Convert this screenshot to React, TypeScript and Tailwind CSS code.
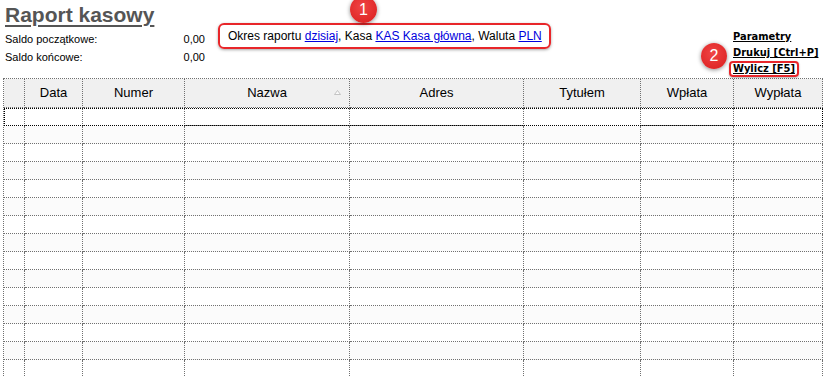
import React from "react";

const cols = ["", "Data", "Numer", "Nazwa", "Adres", "Tytułem", "Wpłata", "Wypłata"];
const gridCls = "grid grid-cols-[21px_58px_102px_165px_174px_117px_93px_1fr]";

function Badge({ n, className }: { n: string; className: string }) {
  return (
    <div
      className={
        "absolute flex items-center justify-center rounded-full bg-[radial-gradient(circle_at_45%_40%,#f04545,#d91c1c)] text-white shadow-[0_1px_4px_rgba(0,0,0,0.45)] text-[16px] " +
        className
      }
      style={{ fontFamily: '"Liberation Sans", Arial, sans-serif' }}
    >
      {n}
    </div>
  );
}

export default function App() {
  const rows = Array.from({ length: 15 }, (_, i) => i);
  return (
    <div className="relative w-[823px] h-[376px] overflow-hidden bg-white" style={{ fontFamily: '"Liberation Sans", Arial, sans-serif' }}>
      <div className="relative flex h-[78px]">
        <div className="w-[213px] pl-[5px] pt-[2px]">
          <div className="text-[21px] leading-[25px] font-bold text-[#555555] underline decoration-[#555555] underline-offset-[3px] decoration-[2px]">
            Raport kasowy
          </div>
          <div className="mt-[3px] text-[11px] leading-[18px] text-black">
            <div className="flex justify-between pr-[8px]">
              <span>Saldo początkowe:</span>
              <span>0,00</span>
            </div>
            <div className="flex justify-between pr-[8px]">
              <span>Saldo końcowe:</span>
              <span>0,00</span>
            </div>
          </div>
        </div>
        <div className="mt-[23px] ml-[5px] h-[26px] w-[333px] rounded-[6px] border-2 border-[#e8262a] shadow-[0_1px_3px_rgba(0,0,0,0.35)] flex items-center pl-[8px] text-[12px] text-black">
          <span>
            Okres raportu <span className="text-[#0000dd] underline">dzisiaj</span>, Kasa{" "}
            <span className="text-[#0000dd] underline">KAS Kasa główna</span>, Waluta{" "}
            <span className="text-[#0000dd] underline">PLN</span>
          </span>
        </div>
        <div className="flex-1" />
        <div className="mt-[29px] w-[94px] text-[11px] leading-[16px] font-bold text-black" style={{ fontFamily: '"DejaVu Sans Condensed", "DejaVu Sans", sans-serif' }}>
          <div className="pl-[4px] underline">Parametry</div>
          <div className="pl-[4px] underline">Drukuj [Ctrl+P]</div>
          <div className="inline-block rounded-[4px] border-2 border-[#e8262a] px-[2px] leading-[12px] shadow-[0_1px_2px_rgba(0,0,0,0.3)]">
            <span className="underline">Wylicz [F5]</span>
          </div>
        </div>
        <Badge n="1" className="left-[350px] top-[-4px] w-[27px] h-[27px]" />
        <Badge n="2" className="left-[701px] top-[43px] w-[26px] h-[26px]" />
      </div>

      <div className="ml-[3px] border-l border-t border-dotted border-[#707070]">
        <div className={gridCls + " bg-[#f0f0f0] h-[29px]"}>
          {cols.map((c, i) => (
            <div
              key={i}
              className="relative flex items-center justify-center border-r border-b border-dotted border-[#707070] text-[13px] text-black"
            >
              {c}
              {c === "Nazwa" && (
                <svg className="absolute right-[8px] top-[11px]" width="7" height="5" viewBox="0 0 7 5">
                  <path d="M3.5 0.5 L6.5 4.5 L0.5 4.5 Z" fill="#fafafa" stroke="#b8b8b8" strokeWidth="0.8" />
                </svg>
              )}
            </div>
          ))}
        </div>
        {rows.map((r) => (
          <div
            key={r}
            className={
              gridCls +
              " h-[18px] " +
              (r % 2 === 1 ? "bg-[#fbfbfb]" : "bg-white") +
              (r === 0 ? " outline outline-1 outline-dotted outline-black -outline-offset-1" : "")
            }
          >
            {cols.map((_, i) => (
              <div key={i} className="border-r border-b border-dotted border-[#707070]" />
            ))}
          </div>
        ))}
      </div>
    </div>
  );
}
